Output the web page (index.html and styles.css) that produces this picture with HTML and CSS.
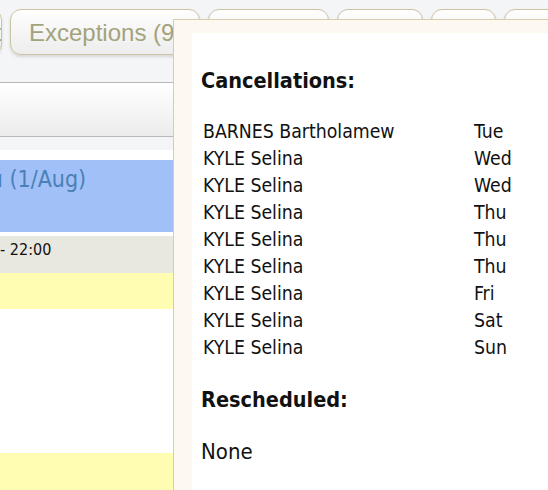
FILE: index.html
```html
<!DOCTYPE html>
<html>
<head>
<meta charset="utf-8">
<link rel="stylesheet" href="styles.css">
</head>
<body>
<div class="page">
  <div class="tabs">
    <div class="tab tab1">Schedule</div>
    <div class="tab tab2">Exceptions (9)</div>
    <div class="tab tab3">Reports</div>
    <div class="tab tab4">Staff</div>
    <div class="tab tab5">Help</div>
    <div class="tab tab6">Settings</div>
  </div>
  <div class="toolbar"></div>
  <div class="sheet">
    <div class="day-head"><span class="shift-day">Thu (1/Aug)</span></div>
    <div class="slot"><span class="shift-time">18:00 - 22:00</span></div>
    <div class="hl"></div>
    <div class="blank"></div>
    <div class="hl hl-low"></div>
  </div>

  <div class="popup">
    <div class="popup-inner">
      <h3 class="ptitle">Cancellations:</h3>
      <table class="list">
        <tr><td class="name">BARNES Bartholamew</td><td>Tue</td></tr>
        <tr><td class="name">KYLE Selina</td><td>Wed</td></tr>
        <tr><td class="name">KYLE Selina</td><td>Wed</td></tr>
        <tr><td class="name">KYLE Selina</td><td>Thu</td></tr>
        <tr><td class="name">KYLE Selina</td><td>Thu</td></tr>
        <tr><td class="name">KYLE Selina</td><td>Thu</td></tr>
        <tr><td class="name">KYLE Selina</td><td>Fri</td></tr>
        <tr><td class="name">KYLE Selina</td><td>Sat</td></tr>
        <tr><td class="name">KYLE Selina</td><td>Sun</td></tr>
      </table>
      <h3 class="ptitle ptitle2">Rescheduled:</h3>
      <p class="none">None</p>
    </div>
  </div>
</div>
</body>
</html>
```
FILE: styles.css
```css
html, body {
  margin: 0;
  padding: 0;
}
body {
  width: 548px;
  height: 490px;
  overflow: hidden;
  background: #f4f5f7;
  font-family: "DejaVu Sans Condensed", "DejaVu Sans", sans-serif;
  font-stretch: condensed;
}
.page {
  position: relative;
  width: 548px;
  height: 490px;
  overflow: hidden;
}
.tabs {
  display: flex;
  gap: 8px;
  padding-top: 9px;
  margin-left: -80px;
  white-space: nowrap;
}
.tab {
  flex: none;
  box-sizing: border-box;
  height: 46px;
  border: 1px solid #cdc4a4;
  border-radius: 11px;
  background: linear-gradient(#fefefe, #ededed);
  box-shadow: 0 2px 3px rgba(0, 0, 0, 0.12);
  font-family: "Liberation Sans", Arial, sans-serif;
  font-stretch: normal;
  font-size: 24px;
  line-height: 45px;
  color: #a3a37b;
  padding-left: 18px;
  overflow: hidden;
}
.tab1 { width: 82px; }
.tab2 { width: 190px; }
.tab3 { width: 121px; }
.tab4 { width: 86px; }
.tab5 { width: 65px; }
.tab6 { width: 120px; }

.toolbar {
  margin-top: 27px;
  height: 53px;
  border-top: 1px solid #b9b9b9;
  border-bottom: 1px solid #b9b9b9;
  background: linear-gradient(#ffffff, #ececec);
}
.sheet {
  margin-top: 13px;
  background: #ffffff;
  padding-top: 10px;
}
.day-head {
  height: 72px;
  background: #a1c0f7;
  box-sizing: border-box;
  padding-top: 6px;
  font-size: 23px;
  line-height: 26px;
  color: #4a80b6;
  white-space: nowrap;
}
.shift-day {
  display: inline-block;
  margin-left: -36px;
}
.slot {
  margin-top: 4px;
  height: 37px;
  box-sizing: border-box;
  padding-top: 4px;
  background: #e8e8e1;
  font-size: 16px;
  line-height: 20px;
  color: #111;
  white-space: nowrap;
}
.shift-time {
  display: inline-block;
  margin-left: -46px;
}
.hl {
  height: 36px;
  background: #fefdb1;
}
.blank {
  height: 144px;
  background: #ffffff;
}
.hl-low {
  height: 60px;
}

.popup {
  position: absolute;
  left: 173px;
  top: 19px;
  width: 420px;
  height: 520px;
  border: 1px solid #d8ccae;
  background: #fdf8f0;
  padding: 13px 0 0 18px;
  box-sizing: border-box;
}
.popup-inner {
  background: #ffffff;
  height: 100%;
  padding: 36px 0 0 9px;
  box-sizing: border-box;
  color: #111;
}
.ptitle {
  margin: 0;
  font-size: 21.5px;
  line-height: 24px;
  font-weight: bold;
}
.list {
  border-collapse: collapse;
  margin-top: 25px;
  font-size: 19.3px;
}
.list td {
  padding: 0 0 0 2px;
  height: 27px;
  line-height: 27px;
  white-space: nowrap;
}
.list td.name {
  width: 269px;
}
.ptitle2 {
  margin-top: 27px;
}
.none {
  margin: 27px 0 0;
  font-size: 22px;
  line-height: 26px;
}
```
